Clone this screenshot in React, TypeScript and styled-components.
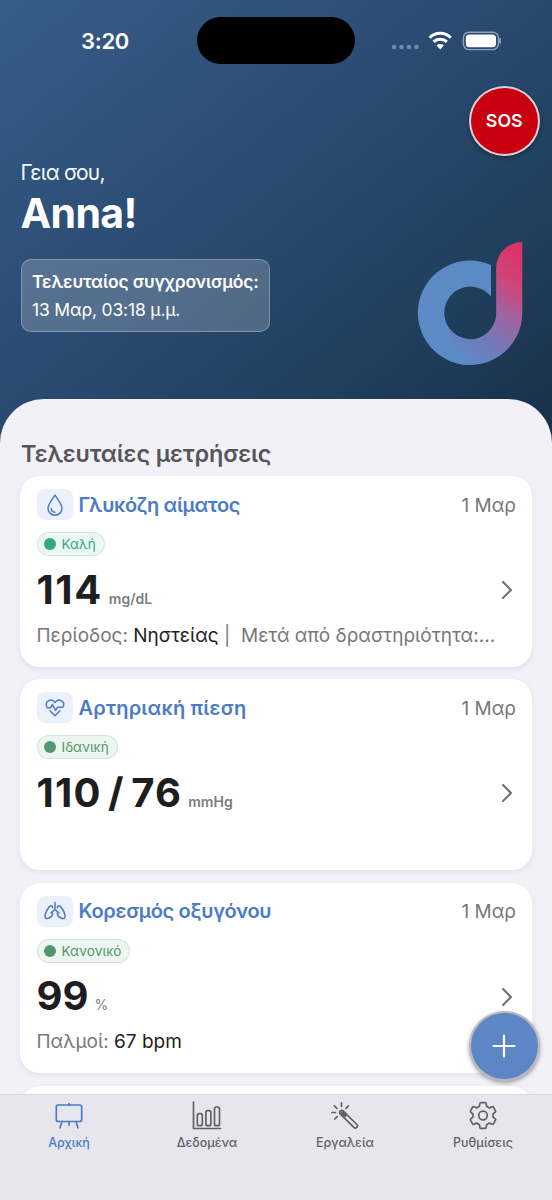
import React from 'react';
import styled, { createGlobalStyle } from 'styled-components';

const GlobalStyle = createGlobalStyle`
  * { box-sizing: border-box; }
  body { margin: 0; background: #f2f1f8; font-family: Inter, "Noto Sans", sans-serif; }
`;

const Screen = styled.main`
  position: relative;
  width: 552px;
  height: 1200px;
  overflow: hidden;
  display: flex;
  flex-direction: column;
  background: #1a304a linear-gradient(141deg, #375d87 0%, #2a4a72 45%, #20405d 72%, #192f49 100%) 0 0 / 100% 450px no-repeat;
`;

const StatusBar = styled.header`
  height: 81px;
  flex: none;
  display: grid;
  grid-template-columns: 197px 158px 197px;
  align-items: center;
`;

const Clock = styled.span`
  justify-self: center;
  padding: 1px 0 0 13px;
  font-size: 22px;
  font-weight: 600;
  letter-spacing: -0.35px;
  color: #fff;
`;

const Island = styled.div`
  height: 46.5px;
  border-radius: 24px;
  background: #000;
`;

const StatusIcons = styled.svg`
  display: block;
  width: 112px;
  height: 24px;
  margin-left: 34px;
`;

const Hero = styled.section`
  height: 317.5px;
  flex: none;
  display: flex;
  justify-content: space-between;
  padding: 0 29px 0 20.5px;
`;

const HeroText = styled.div`
  padding-top: 77.5px;
  display: flex;
  flex-direction: column;
  align-items: flex-start;
`;

const Hello = styled.span`
  font-size: 21px;
  line-height: 28px;
  letter-spacing: -0.8px;
  color: #f4f8fc;
`;

const Name = styled.h1`
  margin: 1px 0 0;
  font-size: 41px;
  line-height: 50px;
  font-weight: 700;
  letter-spacing: -0.6px;
  color: #fff;
`;

const SyncBox = styled.div`
  width: 249.5px;
  height: 73px;
  margin-top: 21px;
  padding: 8px 10.5px;
  border: 1px solid rgba(255, 255, 255, 0.27);
  border-radius: 10px;
  background: rgba(255, 255, 255, 0.2);
  color: #fff;
  font-size: 17.5px;
  line-height: 28px;
  letter-spacing: -0.17px;
  white-space: nowrap;
`;

const SyncTitle = styled.div`
  font-weight: 600;
`;

const Logo = styled.svg`
  width: 106px;
  height: 124px;
  margin-top: 161px;
`;

const Sheet = styled.section`
  flex: 1;
  padding: 40.500px 20px 0;
  border-radius: 44px 44px 0 0;
  background: #f2f1f8;
  display: flex;
  flex-direction: column;
`;

const SheetTitle = styled.h2`
  margin: 0 0 7px;
  padding-left: 1px;
  font-size: 23.5px;
  line-height: 30px;
  font-weight: 600;
  letter-spacing: -0.15px;
  color: #56565a;
`;

const CardList = styled.div`
  display: flex;
  flex-direction: column;
  gap: 12.8px;
`;

const Card = styled.article`
  height: 190.6px;
  flex: none;
  padding: 13px 16px 13px 16.5px;
  border-radius: 20px;
  background: #fff;
  box-shadow: 0 2px 6px rgba(40, 40, 60, 0.08);
`;

const CardHead = styled.div`
  display: flex;
  align-items: center;
  height: 31px;
`;

const IconBox = styled.div`
  width: 36px;
  height: 31px;
  margin-right: 6px;
  border-radius: 8px;
  background: #ebf0fa;
  display: grid;
  place-items: center;
`;

const CardTitle = styled.h3<{ $track: number }>`
  margin: 0;
  flex: 1;
  font-size: 20px;
  line-height: 30px;
  font-weight: 600;
  letter-spacing: ${p => p.$track}px;
  color: #4b7bc4;
`;

const CardDate = styled.span`
  padding-top: 1px;
  font-size: 19px;
  color: #77777a;
`;

const Pill = styled.div<{ $tone: string; $fill: string }>`
  display: inline-flex;
  align-items: center;
  gap: 6px;
  height: 24px;
  margin-top: 12px;
  padding: 0 8px 0 6px;
  border: 1px solid ${p => p.$tone}2b;
  border-radius: 12px;
  background: ${p => p.$fill};
  color: ${p => p.$tone};
  font-size: 13.5px;

  &::before {
    content: '';
    width: 12px;
    height: 12px;
    border-radius: 50%;
    background: ${p => p.$tone};
  }
`;

const ValueRow = styled.div`
  display: flex;
  align-items: center;
  justify-content: space-between;
  height: 48px;
  margin-top: 9px;
  padding-right: 2px;
`;

const Value = styled.div<{ $track: number }>`
  font-size: 40px;
  font-weight: 700;
  letter-spacing: ${p => p.$track}px;
  word-spacing: ${p => p.$track * -3.5}px;
  color: #1e1e20;
`;

const Unit = styled.span<{ $weight: number }>`
  margin-left: 6px;
  font-size: 14px;
  font-weight: ${p => p.$weight};
  letter-spacing: 0;
  color: #7d7d81;
`;

const Detail = styled.div`
  margin-top: 9.5px;
  font-size: 19px;
  line-height: 26px;
  color: #77777a;
  white-space: pre;

  b { font-weight: 400; color: #1e1e20; }
`;

const RoundButton = styled.button<{ $top: number; $fill: string; $ring: string }>`
  position: absolute;
  top: ${p => p.$top}px;
  left: 469px;
  width: 70.5px;
  height: 70px;
  padding: 0;
  border: 2.5px solid ${p => p.$ring};
  border-radius: 50%;
  background: ${p => p.$fill};
  color: #fff;
  font: 600 17.8px Inter, sans-serif;
  display: grid;
  place-items: center;
  box-shadow: 0 2px 4px rgba(0, 0, 0, 0.35);
`;

const TabBar = styled.nav`
  position: absolute;
  inset: auto 0 0 0;
  height: 106.5px;
  padding-top: 6.5px;
  border-top: 1px solid #d9d9df;
  background: #e7e6ed;
  display: grid;
  grid-template-columns: repeat(4, 1fr);
`;

const Tab = styled.a<{ $active?: boolean }>`
  display: flex;
  flex-direction: column;
  align-items: center;
  gap: 4px;
  font-size: 12.5px;
  line-height: 17px;
  font-weight: 500;
  color: ${p => (p.$active ? '#4b7bc4' : '#626266')};
`;

const Line = styled.svg`
  fill: none;
  stroke: currentColor;
  stroke-width: 1.7;
  stroke-linecap: round;
  stroke-linejoin: round;
`;

const CardGlyph = styled(Line)`
  color: #4b7bc4;
  stroke-width: 1.5;
`;

const ChevronLine = styled(Line)`
  margin-top: 2px;
  color: #717175;
  stroke-width: 2.1;
`;

const PlusLine = styled(Line)`
  stroke-width: 2.2;
`;

const Drop = () => (
  <CardGlyph width="24" height="26" viewBox="0 0 24 26">
    <path d="M12 3.2C9.5 7.2 5 12.2 5 16.2a7 7 0 0 0 14 0C19 12.2 14.5 7.2 12 3.2Z" />
    <path d="M8.3 16.5a3.800 3.800 0 0 0 3.700 3.700" />
  </CardGlyph>
);

const HeartPulse = () => (
  <CardGlyph width="24" height="24" viewBox="0 0 24 24">
    <path d="M3.600 10.500C1.800 5.200 8.500 1.500 12 6.500c3.500-5 10.200-1.300 8.400 4" />
    <path d="M7 14.800 12 19.800 17 14.800" />
    <path d="M4 11.800H7.500L9.500 8.500 12.500 14.500 14.500 11.300H19.500" />
  </CardGlyph>
);

const Lungs = () => (
  <CardGlyph width="24" height="24" viewBox="0 0 24 24">
    <path d="M12 3.500V10.500M12 10.500 8 13.800M12 10.500 16 13.800" />
    <path d="M9.600 8.800C9.600 6 7.400 6.200 5.900 8.300 3.800 11.200 1.800 15.200 2 18 2.200 19.900 4.200 19.900 6 19 8.200 18 9.600 17.200 9.600 14.800V14" />
    <path d="M14.400 8.800C14.400 6 16.600 6.200 18.100 8.300 20.200 11.200 22.200 15.200 22 18 21.800 19.900 19.800 19.900 18 19 15.800 18 14.400 17.200 14.400 14.800V14" />
  </CardGlyph>
);

const Chevron = () => (
  <ChevronLine width="14" height="22" viewBox="0 0 14 22">
    <path d="M3 3 11 11 3 19" />
  </ChevronLine>
);

const TabGlyph = ({ children }: { children: React.ReactNode }) => (
  <Line width="30" height="29" viewBox="0 0 30 29">{children}</Line>
);

interface Reading {
  icon: React.ReactNode;
  title: string;
  track: number;
  status: string;
  tone: string;
  fill: string;
  value: string;
  valueTrack: number;
  unit: string;
  unitWeight: number;
  detail?: React.ReactNode;
}

const readings: Reading[] = [
  {
    icon: <Drop />, title: 'Γλυκόζη αίματος', track: -0.35, status: 'Καλή', tone: '#32a884', fill: '#ebf7f3',
    value: '114', valueTrack: 1.6, unit: 'mg/dL', unitWeight: 600,
    detail: <>Περίοδος: <b>Νηστείας</b> |  Μετά από δραστηριότητα:...</>,
  },
  {
    icon: <HeartPulse />, title: 'Αρτηριακή πίεση', track: 0.2, status: 'Ιδανική', tone: '#549670', fill: '#edf5f0',
    value: '110 / 76', valueTrack: 1.2, unit: 'mmHg', unitWeight: 600,
  },
  {
    icon: <Lungs />, title: 'Κορεσμός οξυγόνου', track: -0.32, status: 'Κανονικό', tone: '#549670', fill: '#edf5f0',
    value: '99', valueTrack: 0, unit: '%', unitWeight: 400,
    detail: <>Παλμοί: <b>67 bpm</b></>,
  },
];

export default function App() {
  return (
    <Screen>
      <GlobalStyle />
      <StatusBar>
        <Clock>3:20</Clock>
        <Island />
        <StatusIcons viewBox="0 0 112 24" fill="none">
          <g fill="#7389a5">
            <circle cx="5" cy="18" r="2.300" />
            <circle cx="12.500" cy="18" r="2.300" />
            <circle cx="20" cy="18" r="2.300" />
            <circle cx="27.500" cy="18" r="2.300" />
          </g>
          <g stroke="#fff" strokeWidth="3">
            <path d="M40.600 8.700a14.800 14.800 0 0 1 21.200 0" />
            <path d="M44.600 12.900a9.400 9.400 0 0 1 13.200 0" />
          </g>
          <path d="M51.200 20.600 47.500 16.500a5.500 5.500 0 0 1 7.400 0Z" fill="#fff" />
          <rect x="74.400" y="3.200" width="35" height="17.400" rx="5.500" stroke="#8ea3bd" strokeWidth="1.400" />
          <rect x="76.800" y="5.600" width="30.200" height="12.600" rx="3.500" fill="#fff" />
          <path d="M111 9.300v5.300" stroke="#8ea3bd" strokeWidth="1.800" />
        </StatusIcons>
      </StatusBar>
      <Hero>
        <HeroText>
          <Hello>Γεια σου,</Hello>
          <Name>Anna!</Name>
          <SyncBox>
            <SyncTitle>Τελευταίος συγχρονισμός:</SyncTitle>
            <div>13 Μαρ, 03:18 μ.μ.</div>
          </SyncBox>
        </HeroText>
        <Logo viewBox="417 242 106 124">
          <defs>
            <linearGradient id="brand" gradientUnits="userSpaceOnUse" x1="518" y1="256" x2="450" y2="348">
              <stop offset="0" stopColor="#dc3468" />
              <stop offset="0.250" stopColor="#cb487d" />
              <stop offset="0.500" stopColor="#9c66a5" />
              <stop offset="0.750" stopColor="#7379b8" />
              <stop offset="1" stopColor="#5d89c7" />
            </linearGradient>
          </defs>
          <path fill="#5d89c7" d="M491 265A52.200 52.200 0 1 0 470 365L470 339A26.200 26.200 0 1 1 491 296.500Z" />
          <path fill="url(#brand)" d="M450 361V330A26.200 26.200 0 0 0 496.200 313V268A26 26 0 0 1 522.300 242V313A52.200 52.200 0 0 1 450 361Z" />
        </Logo>
      </Hero>
      <Sheet>
        <SheetTitle>Τελευταίες μετρήσεις</SheetTitle>
        <CardList>
          {readings.map(r => (
            <Card key={r.title}>
              <CardHead>
                <IconBox>{r.icon}</IconBox>
                <CardTitle $track={r.track}>{r.title}</CardTitle>
                <CardDate>1 Μαρ</CardDate>
              </CardHead>
              <Pill $tone={r.tone} $fill={r.fill}>{r.status}</Pill>
              <ValueRow>
                <Value $track={r.valueTrack}>{r.value}<Unit $weight={r.unitWeight}>{r.unit}</Unit></Value>
                <Chevron />
              </ValueRow>
              {r.detail && <Detail>{r.detail}</Detail>}
            </Card>
          ))}
          <Card />
        </CardList>
      </Sheet>
      <RoundButton $top={85.5} $fill="#c8000f" $ring="#d6d3d8">SOS</RoundButton>
      <RoundButton $top={1011} $fill="#5c86c5" $ring="#b9babf">
        <PlusLine width="24" height="24" viewBox="0 0 24 24">
          <path d="M12 1.500V22.500M1.500 12H22.500" />
        </PlusLine>
      </RoundButton>
      <TabBar>
        <Tab $active>
          <TabGlyph>
            <rect x="2.300" y="4" width="25.400" height="16.500" rx="2" />
            <path d="M15 2.500V4M15 20.500V24M8 20.500 6 27M22 20.500 24 27" />
          </TabGlyph>
          Αρχική
        </Tab>
        <Tab>
          <TabGlyph>
            <path d="M1.500 1V27.500H28.500" />
            <rect x="5.300" y="12.700" width="5" height="12" rx="1.800" />
            <rect x="13.900" y="9.700" width="5" height="15" rx="1.800" />
            <rect x="22.500" y="6" width="5" height="18.700" rx="1.800" />
          </TabGlyph>
          Δεδομένα
        </Tab>
        <Tab>
          <TabGlyph>
            <path d="M11.500 1.800V5.500M4.300 4.800 7 7.500M18.300 4.800 15.800 7.500M2 11.500H5.500M4.800 18 7.200 15.600" />
            <path d="M10.200 12.800a1.900 1.900 0 0 1 2.900-2.900L26.800 23.500a2 2 0 0 1-2.900 2.900Z" />
            <path d="M10.500 12.800 13 10.200 16.500 13.700 14 16.300Z" fill="currentColor" />
          </TabGlyph>
          Εργαλεία
        </Tab>
        <Tab>
          <TabGlyph>
            <circle cx="15" cy="14.500" r="4.300" />
            <path d="M12.800 1.600H17.200Q18 1.600 18.100 2.400L18.600 5.300 21.400 6.900 24.200 5.800Q25 5.500 25.400 6.200L27.500 9.900Q27.900 10.600 27.300 11.100L25 13V16L27.300 17.900Q27.900 18.400 27.500 19.100L25.400 22.800Q25 23.500 24.200 23.200L21.400 22.100 18.600 23.700 18.100 26.600Q18 27.400 17.200 27.400H12.800Q12 27.400 11.900 26.600L11.400 23.700 8.600 22.100 5.800 23.200Q5 23.500 4.600 22.800L2.500 19.100Q2.100 18.400 2.700 17.900L5 16V13L2.700 11.100Q2.100 10.600 2.500 9.900L4.600 6.200Q5 5.500 5.800 5.800L8.600 6.900 11.400 5.300 11.900 2.400Q12 1.600 12.800 1.600Z" />
          </TabGlyph>
          Ρυθμίσεις
        </Tab>
      </TabBar>
    </Screen>
  );
}
